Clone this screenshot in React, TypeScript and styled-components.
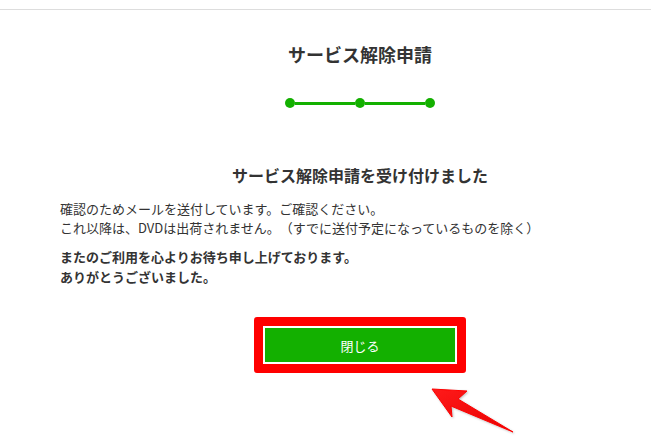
import React from 'react';
import styled, { createGlobalStyle } from 'styled-components';

const GlobalStyle = createGlobalStyle`
  html, body {
    margin: 0;
    padding: 0;
    overflow: hidden;
    background: #fff;
  }
  body {
    font-family: 'Noto Sans CJK JP', 'Noto Sans', sans-serif;
    color: #333;
    text-spacing-trim: space-all;
  }
`;

export default function App() {
  return (
    <Page>
      <GlobalStyle />
      <Header />
      <Column>
        <Title>サービス解除申請</Title>
        <Stepper>
          <Dot />
          <StepLine />
          <Dot />
          <StepLine />
          <Dot />
        </Stepper>
        <Heading>サービス解除申請を受け付けました</Heading>
        <Message>
          確認のためメールを送付しています。ご確認ください。
          <br />
          これ以降は、DVDは出荷されません。（すでに送付予定になっているものを除く）
        </Message>
        <Thanks>
          またのご利用を心よりお待ち申し上げております。
          <br />
          ありがとうございました。
        </Thanks>
        <ButtonRow>
          <Highlight>
            <CloseButton>閉じる</CloseButton>
          </Highlight>
        </ButtonRow>
      </Column>
      <Arrow viewBox="0 0 100 70" width="100" height="70">
        <defs>
          <linearGradient id="arrowFill" x1="0" y1="0" x2="1" y2="1">
            <stop offset="0" stopColor="#ff1a1a" />
            <stop offset="1" stopColor="#e60000" />
          </linearGradient>
        </defs>
        <polygon
          points="12,19 47,21 38,29 93,62 31,36 32,47"
          fill="url(#arrowFill)"
          stroke="#f00"
          strokeWidth="1"
          strokeLinejoin="round"
        />
      </Arrow>
    </Page>
  );
}

const Page = styled.div`
  position: relative;
  width: 651px;
  height: 440px;
  overflow: hidden;
`;

const Header = styled.div`
  height: 9px;
  border-bottom: 1px solid #ddd;
`;

const Column = styled.div`
  width: 600px;
  margin-left: 60px;
  display: flex;
  flex-direction: column;
`;

const Title = styled.h1`
  margin: 31px 0 0;
  font-size: 18px;
  line-height: 27px;
  font-weight: bold;
  text-align: center;
`;

const Stepper = styled.div`
  margin-top: 30px;
  display: flex;
  align-items: center;
  justify-content: center;
  height: 10px;
`;

const Dot = styled.span`
  width: 10px;
  height: 10px;
  border-radius: 50%;
  background: #13b000;
`;

const StepLine = styled.span`
  width: 60px;
  height: 3px;
  background: #13b000;
`;

const Heading = styled.h2`
  margin: 55px 0 0;
  font-size: 16px;
  line-height: 24px;
  font-weight: bold;
  text-align: center;
`;

const Message = styled.p`
  margin: 12px 0 0;
  font-size: 13px;
  line-height: 19px;
`;

const Thanks = styled.p`
  margin: 10px 0 0;
  font-size: 13px;
  line-height: 20px;
  font-weight: bold;
`;

const ButtonRow = styled.div`
  margin-top: 30px;
  display: flex;
  justify-content: center;
`;

const Highlight = styled.div`
  border: 9px solid #f00;
  border-radius: 3px;
  display: flex;
`;

const CloseButton = styled.button`
  width: 194px;
  height: 38px;
  border: 2px solid #fff;
  background: #13b000;
  color: #fff;
  font-family: 'Noto Sans CJK JP', 'Noto Sans', sans-serif;
  font-size: 13px;
  padding: 0;
  cursor: pointer;
`;

const Arrow = styled.svg`
  position: absolute;
  left: 420px;
  top: 370px;
  filter: drop-shadow(1px 1px 1px rgba(0, 0, 0, 0.25));
`;
